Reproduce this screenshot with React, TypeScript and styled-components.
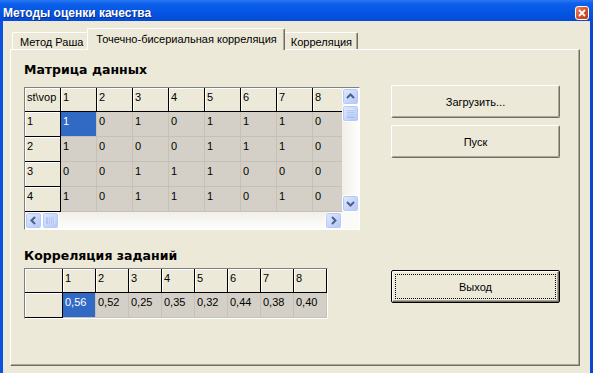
import React from 'react';
import styled, { createGlobalStyle } from 'styled-components';

const GlobalStyle = createGlobalStyle`
  html, body {
    margin: 0;
    padding: 0;
    background: #ECE9D8;
  }
  body {
    font-family: 'Liberation Sans', Arial, sans-serif;
    font-size: 11px;
    color: #000;
  }
`;

const matrix = [
  [1, 0, 1, 0, 1, 1, 1, 0],
  [1, 0, 0, 0, 1, 1, 1, 0],
  [0, 0, 1, 1, 1, 0, 0, 0],
  [1, 0, 1, 1, 1, 0, 1, 0],
];

const correlation = ['0,56', '0,52', '0,25', '0,35', '0,32', '0,44', '0,38', '0,40'];

const tabs = ['Метод Раша', 'Точечно-бисериальная корреляция', 'Корреляция'];

const Window = styled.div`
  width: 593px;
  height: 373px;
  overflow: hidden;
  display: flex;
  flex-direction: column;
`;

const TitleBar = styled.div`
  height: 21px;
  flex-shrink: 0;
  display: flex;
  justify-content: space-between;
  align-items: flex-start;
  padding: 0 4px 0 3px;
  background: linear-gradient(to bottom, #2A78F0 0%, #0C5FEA 18%, #0556E4 55%, #034BD6 100%);
`;

const Title = styled.div`
  padding-top: 6px;
  line-height: 14px;
  font-size: 12px;
  font-weight: bold;
  color: #fff;
  text-shadow: 1px 1px 0 #0A2A8A;
  white-space: nowrap;
`;

const CloseButton = styled.div`
  margin-top: 6px;
  width: 14px;
  height: 14px;
  box-sizing: border-box;
  border: 1px solid #fff;
  border-radius: 3px;
  background: linear-gradient(135deg, #EE8463 0%, #D9512C 50%, #C03A14 100%);
  display: flex;
  align-items: center;
  justify-content: center;
`;

const Body = styled.div`
  flex: 1;
  background: #ECE9D8;
  border-left: 3px solid #0B50E0;
  border-right: 3px solid #0A46D0;
  padding: 7px 10px 0 7px;
  display: flex;
  flex-direction: column;
`;

const TabStrip = styled.div`
  height: 21px;
  display: flex;
  align-items: flex-end;
  padding-left: 2px;
  position: relative;
  z-index: 1;
`;

const Tab = styled.div<{ $active?: boolean }>`
  box-sizing: border-box;
  height: ${p => (p.$active ? 22 : 17)}px;
  margin: 0 ${p => (p.$active ? -2 : 0)}px ${p => (p.$active ? -1 : 0)}px;
  padding: ${p => (p.$active ? '4px 7px 0 8px' : '3px 5px 0 7px')};
  background: #ECE9D8;
  border-top: 1px solid #fff;
  border-left: 1px solid #fff;
  border-right: 1px solid #716F64;
  box-shadow: inset -1px 0 0 #ACA899;
  border-radius: 2px 2px 0 0;
  line-height: 13px;
  white-space: nowrap;
  position: relative;
  z-index: ${p => (p.$active ? 2 : 1)};
`;

const Panel = styled.div`
  width: 570px;
  height: 317px;
  box-sizing: border-box;
  border-top: 1px solid #fff;
  border-left: 1px solid #fff;
  border-right: 1px solid #716F64;
  border-bottom: 1px solid #716F64;
  box-shadow: inset -1px -1px 0 #ACA899;
  padding: 12px 0 0 13px;
  display: flex;
`;

const LeftColumn = styled.div`
  width: 336px;
  display: flex;
  flex-direction: column;
`;

const SectionTitle = styled.div<{ $gapTop?: number; $gapBottom: number }>`
  height: 16px;
  line-height: 16px;
  margin-top: ${p => p.$gapTop ?? 0}px;
  margin-bottom: ${p => p.$gapBottom}px;
  font-family: 'DejaVu Sans', 'Liberation Sans', sans-serif;
  font-weight: bold;
  font-size: 12.5px;
  white-space: nowrap;
`;

const GridFrame = styled.div`
  width: 336px;
  height: 143px;
  box-sizing: border-box;
  border: 1px solid;
  border-color: #808080 #fff #fff #808080;
  display: grid;
  grid-template-columns: 317px 17px;
  grid-template-rows: 124px 17px;
`;

const Viewport = styled.div`
  overflow: hidden;
  display: grid;
  grid-template-columns: repeat(9, 36px);
  grid-template-rows: 24px repeat(4, 25px);
`;

type CellKind = 'fixed' | 'data' | 'selected';

const Cell = styled.div<{ $kind: CellKind }>`
  box-sizing: border-box;
  padding: 3px 2px 0;
  line-height: 13px;
  overflow: hidden;
  white-space: nowrap;
  border-right: 1px solid;
  border-bottom: 1px solid;
  ${p =>
    p.$kind === 'fixed'
      ? `
    background: #ECE9D8;
    border-color: #000;
    box-shadow: inset 1px 1px 0 #fff;
  `
      : p.$kind === 'selected'
      ? `
    background: #316AC5;
    color: #fff;
    border-color: #C4C1B9;
  `
      : `
    background: #D4D0C8;
    border-color: #C4C1B9;
  `}
`;

const VScroll = styled.div`
  display: flex;
  flex-direction: column;
  background: linear-gradient(to right, #F1EFE8, #FEFEFD);
`;

const HScroll = styled.div`
  display: flex;
  background: linear-gradient(to bottom, #F1EFE8, #FEFEFD);
`;

const Spacer = styled.div`
  flex: 1;
`;

const Corner = styled.div`
  background: #FAFAF7;
`;

const ScrollButton = styled.div`
  width: 17px;
  height: 17px;
  flex-shrink: 0;
  box-sizing: border-box;
  border: 1px solid #fff;
  border-radius: 3px;
  background: linear-gradient(135deg, #E2EAFE 0%, #C6D6FC 55%, #B2C7F6 100%);
  box-shadow: inset 0 0 0 1px #B7CAF5;
  display: flex;
  align-items: center;
  justify-content: center;
`;

const CorrFrame = styled.div`
  width: 304px;
  box-sizing: border-box;
  border: 1px solid;
  border-color: #808080 #fff #fff #808080;
  display: grid;
  grid-template-columns: 38px repeat(8, 33px);
  grid-template-rows: 24px 25px;
`;

const RightColumn = styled.div`
  margin-left: 31px;
  padding-top: 23px;
  display: flex;
  flex-direction: column;
`;

const Button = styled.div<{ $default?: boolean; $gapTop: number }>`
  width: 169px;
  height: 33px;
  margin-top: ${p => p.$gapTop}px;
  box-sizing: border-box;
  display: flex;
  align-items: center;
  justify-content: center;
  background: #ECE9D8;
  border-radius: 2px;
  border: 1px solid;
  border-color: ${p => (p.$default ? '#000' : '#fff #716F64 #716F64 #fff')};
  box-shadow: ${p =>
    p.$default
      ? 'inset 1px 1px 0 #fff, inset -1px -1px 0 #716F64, inset -2px -2px 0 #ACA899'
      : 'inset -1px -1px 0 #ACA899'};
  padding: ${p => (p.$default ? '3px' : '0')};
`;

const FocusRect = styled.div`
  flex: 1;
  align-self: stretch;
  display: flex;
  align-items: center;
  justify-content: center;
  border: 1px dotted #000;
`;

type Dir = 'up' | 'down' | 'left' | 'right';
const rotation: Record<Dir, number> = { up: 0, right: 90, down: 180, left: 270 };

const Chevron = ({ dir }: { dir: Dir }) => (
  <svg width="13" height="13" viewBox="0 0 13 13" style={{ transform: `rotate(${rotation[dir]}deg)` }}>
    <polyline points="3,8 6.5,4.5 10,8" fill="none" stroke="#4D6185" strokeWidth="2" />
  </svg>
);

const Grip = ({ vertical }: { vertical?: boolean }) => (
  <svg width="9" height="9" viewBox="0 0 9 9" style={{ transform: vertical ? 'none' : 'rotate(90deg)' }}>
    {[1, 3, 5, 7].map(y => (
      <g key={y}>
        <line x1="1" x2="8" y1={y} y2={y} stroke="#EEF3FE" strokeWidth="1" />
        <line x1="1" x2="8" y1={y + 1} y2={y + 1} stroke="#8CA8E8" strokeWidth="1" />
      </g>
    ))}
  </svg>
);

export default function App() {
  return (
    <>
      <GlobalStyle />
      <Window>
        <TitleBar>
          <Title>Методы оценки качества</Title>
          <CloseButton>
            <svg width="8" height="8" viewBox="0 0 8 8">
              <path d="M1 1 L7 7 M7 1 L1 7" stroke="#fff" strokeWidth="1.8" />
            </svg>
          </CloseButton>
        </TitleBar>
        <Body>
          <TabStrip>
            {tabs.map((t, i) => (
              <Tab key={t} $active={i === 1}>
                {t}
              </Tab>
            ))}
          </TabStrip>
          <Panel>
            <LeftColumn>
              <SectionTitle $gapBottom={9}>Матрица данных</SectionTitle>
              <GridFrame>
                <Viewport>
                  <Cell $kind="fixed">st\vop</Cell>
                  {matrix[0].map((_, c) => (
                    <Cell key={`h${c}`} $kind="fixed">
                      {c + 1}
                    </Cell>
                  ))}
                  {matrix.map((row, r) => (
                    <React.Fragment key={r}>
                      <Cell $kind="fixed">{r + 1}</Cell>
                      {row.map((v, c) => (
                        <Cell key={c} $kind={r === 0 && c === 0 ? 'selected' : 'data'}>
                          {v}
                        </Cell>
                      ))}
                    </React.Fragment>
                  ))}
                </Viewport>
                <VScroll>
                  <ScrollButton>
                    <Chevron dir="up" />
                  </ScrollButton>
                  <ScrollButton>
                    <Grip vertical />
                  </ScrollButton>
                  <Spacer />
                  <ScrollButton>
                    <Chevron dir="down" />
                  </ScrollButton>
                </VScroll>
                <HScroll>
                  <ScrollButton>
                    <Chevron dir="left" />
                  </ScrollButton>
                  <ScrollButton>
                    <Grip />
                  </ScrollButton>
                  <Spacer />
                  <ScrollButton>
                    <Chevron dir="right" />
                  </ScrollButton>
                </HScroll>
                <Corner />
              </GridFrame>

              <SectionTitle $gapTop={18} $gapBottom={4}>
                Корреляция заданий
              </SectionTitle>
              <CorrFrame>
                <Cell $kind="fixed" />
                {correlation.map((_, c) => (
                  <Cell key={`ch${c}`} $kind="fixed">
                    {c + 1}
                  </Cell>
                ))}
                <Cell $kind="fixed" />
                {correlation.map((v, c) => (
                  <Cell key={`cv${c}`} $kind={c === 0 ? 'selected' : 'data'}>
                    {v}
                  </Cell>
                ))}
              </CorrFrame>
            </LeftColumn>

            <RightColumn>
              <Button $gapTop={0}>Загрузить...</Button>
              <Button $gapTop={7}>Пуск</Button>
              <Button $gapTop={112} $default>
                <FocusRect>Выход</FocusRect>
              </Button>
            </RightColumn>
          </Panel>
        </Body>
      </Window>
    </>
  );
}
